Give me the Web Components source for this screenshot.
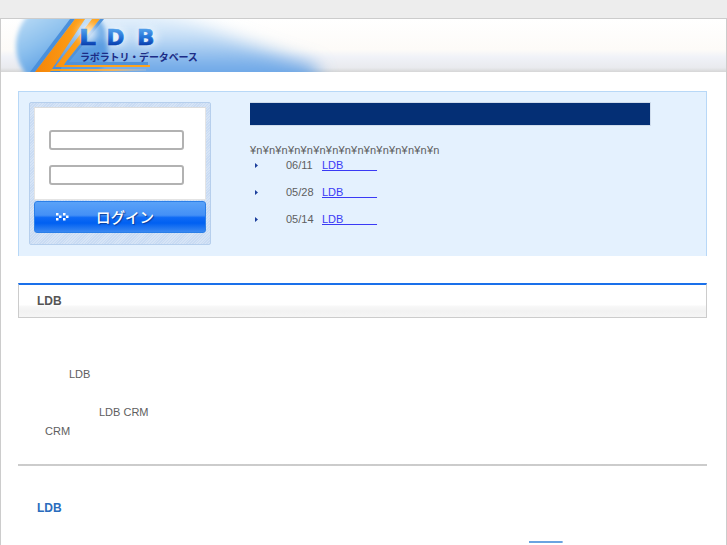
<!DOCTYPE html>
<html lang="ja"><head><meta charset="utf-8"><title>LDB</title>
<style>
html,body{margin:0;padding:0;height:545px;overflow:hidden;background:#fff}
body{font:11px/1 "Liberation Sans",Arial,"Noto Sans CJK JP",sans-serif;color:#5e5e5e}
</style></head><body>
<ldb-app>
  <ldb-header></ldb-header>
  <ldb-panel>
    <ldb-login></ldb-login>
    <ldb-news>
      <ldb-news-item date="06/11"></ldb-news-item>
      <ldb-news-item date="05/28"></ldb-news-item>
      <ldb-news-item date="05/14"></ldb-news-item>
    </ldb-news>
  </ldb-panel>
  <ldb-title>LDB</ldb-title>
  <ldb-intro></ldb-intro>
  <ldb-footer></ldb-footer>
</ldb-app>
<script>
function def(name,html,init){
  customElements.define(name,class extends HTMLElement{
    constructor(){super();this.attachShadow({mode:'open'}).innerHTML=html;}
    connectedCallback(){if(init)init(this);}
  });
}
def('ldb-app',`<style>
:host{display:block;height:545px;box-sizing:border-box;padding-top:18px;background:linear-gradient(#ededed 18px,#fff 18px)}
.frame{border:1px solid #ccc;border-bottom:0;height:527px;overflow:hidden;box-sizing:border-box;background:#fff}
</style><div class="frame"><slot></slot></div>`);

def('ldb-header',`<style>:host{display:block;height:53px}svg{display:block}</style>
<svg width="725" height="53" viewBox="1 19 725 53" xmlns="http://www.w3.org/2000/svg">
<defs>
<linearGradient id="base" x1="0" y1="0" x2="0" y2="1"><stop offset="0" stop-color="#fff"/><stop offset=".58" stop-color="#fdfbf8"/><stop offset=".72" stop-color="#f0f2f8"/><stop offset=".92" stop-color="#e9eaee"/><stop offset="1" stop-color="#d6d6d6"/></linearGradient>
<linearGradient id="sky" gradientUnits="userSpaceOnUse" x1="0" y1="19" x2="0" y2="72"><stop offset="0" stop-color="#e6f2fc"/><stop offset=".4" stop-color="#bcd9f5"/><stop offset=".75" stop-color="#86b8ec"/><stop offset="1" stop-color="#69a4e6"/></linearGradient>
<linearGradient id="ball" gradientUnits="userSpaceOnUse" x1="20" y1="19" x2="50" y2="72"><stop offset="0" stop-color="#b6d9f5"/><stop offset=".5" stop-color="#8cc0ee"/><stop offset="1" stop-color="#5a9de2"/></linearGradient>
<linearGradient id="or" gradientUnits="userSpaceOnUse" x1="35" y1="0" x2="85" y2="0"><stop offset="0" stop-color="#f58508"/><stop offset="1" stop-color="#ffa31a"/></linearGradient>
<linearGradient id="lineH" gradientUnits="userSpaceOnUse" x1="58" y1="0" x2="150" y2="0"><stop offset="0" stop-color="#f6a01c"/><stop offset=".6" stop-color="#efb35c"/><stop offset="1" stop-color="#bcc6d4" stop-opacity=".2"/></linearGradient>
<linearGradient id="wedge" gradientUnits="userSpaceOnUse" x1="0" y1="19" x2="0" y2="72"><stop offset="0" stop-color="#bcdcf6"/><stop offset="1" stop-color="#3f86d8"/></linearGradient>
<linearGradient id="letter" gradientUnits="userSpaceOnUse" x1="0" y1="-15" x2="0" y2="0"><stop offset="0" stop-color="#4c9ae8"/><stop offset=".55" stop-color="#1f6fd6"/><stop offset="1" stop-color="#0b3fae"/></linearGradient>
<filter id="b8" x="-20%" y="-40%" width="140%" height="180%"><feGaussianBlur stdDeviation="9"/></filter>
<filter id="b2" x="-20%" y="-20%" width="140%" height="140%"><feGaussianBlur stdDeviation="2"/></filter>
<filter id="b4" x="-50%" y="-50%" width="200%" height="200%"><feGaussianBlur stdDeviation="4"/></filter>
<clipPath id="hd"><rect x="0" y="19" width="727" height="53"/></clipPath>
</defs>
<rect x="0" y="19" width="727" height="53" fill="url(#base)"/>
<g clip-path="url(#hd)">
<path d="M70 6H150C195 22 255 50 315 66L325 100H60Z" fill="url(#sky)" filter="url(#b8)"/>
<circle cx="62" cy="46" r="46" fill="url(#ball)" filter="url(#b2)"/>
<path d="M85 19H95L65 56 60 72H49Z" fill="url(#wedge)"/>
<path d="M70 19H75L35 72H30Z" fill="#4a90dc"/>
<path d="M75 19H85L50 72H35Z" fill="url(#or)"/>
<path d="M92 19H100L66 62 64 65H150V67H55Z" fill="url(#or)"/>
<path d="M100 19H104L69 62H148V65H64L66 62Z" fill="#4f92da"/>
<path d="M52 69H146V71H50Z" fill="url(#lineH)"/>
<ellipse cx="88" cy="33" rx="9" ry="9" fill="#fff" opacity=".8" filter="url(#b4)"/>
<ellipse cx="116" cy="37" rx="10" ry="9" fill="#fff" opacity=".7" filter="url(#b4)"/>
<ellipse cx="147" cy="37" rx="10" ry="9" fill="#fff" opacity=".7" filter="url(#b4)"/>
</g>
<g font-family="'DejaVu Sans',sans-serif" font-weight="700" font-size="20.5" fill="url(#letter)" stroke="url(#letter)" stroke-width=".6">
<text transform="translate(79 45) scale(1.3 1)">L</text>
<text transform="translate(106.5 45) scale(1.05 1)">D</text>
<text transform="translate(137 45) scale(1.12 1)">B</text></g>
<text x="80" y="60.5" font-family="'Noto Sans CJK JP',sans-serif" font-weight="700" font-size="10" letter-spacing="-.15" fill="#1c2c86">ラボラトリ・データベース</text>
</svg>`);

def('ldb-panel',`<style>
:host{display:flex;margin:19px 19px 0 17px;height:165px;box-sizing:border-box;background:#e4f1fe;border:1px solid #b8d8f7;border-bottom:0;padding:10px 10px 0 10px}
</style><slot></slot>`);

def('ldb-login',`<style>
:host{display:block;flex:none;width:182px;height:143px;box-sizing:border-box;border:1px solid #b6cfed;border-radius:2px;padding:4px;
background:repeating-linear-gradient(135deg,#c9dbf3 0 1px,#d6e4f6 1px 2px)}
.form{height:93px;box-sizing:border-box;background:#fff;border:1px solid #e4e4e4;border-top-color:#ddd;display:flex;flex-direction:column;gap:15px;padding:22px 21px 0 14px}
.form div{height:20px;box-sizing:border-box;border:2px solid #b2b2b2;border-radius:3px;background:#fff}
.btn{margin-top:1px;height:32px;box-sizing:border-box;border:1px solid #2b7fe8;border-radius:3px;
background:linear-gradient(#5aa2f8 0,#4490f6 44%,#0f6af5 52%,#0060f2 70%,#3a88f1 100%);
display:flex;align-items:center;padding-left:21px;color:#fff}
svg{display:block;flex:none}
span{margin-left:26px;font:500 14.5px/1 "Noto Sans CJK JP",sans-serif;text-shadow:1px 1px 1px #0a3f9a}
</style>
<div class="form"><div></div><div></div></div>
<div class="btn"><svg width="14" height="10" viewBox="0 0 14 10"><g fill="#fff"><rect x="0" y="1" width="2.5" height="2.5"/><rect x="0" y="6" width="2.5" height="2.5"/><rect x="3" y="3.5" width="2.5" height="2.5"/><rect x="7" y="1" width="2.5" height="2.5"/><rect x="7" y="6" width="2.5" height="2.5"/><rect x="10" y="3.5" width="2.5" height="2.5"/></g></svg><span>ログイン</span></div>`);

def('ldb-news',`<style>
:host{display:block;flex:none;width:401px;margin-left:39px}
.bar{height:24px;box-sizing:border-box;background:#042f75;border:1px solid #cfdcec;border-width:1px 1px 1px 0}
p{margin:18px 0 0;line-height:12px;letter-spacing:.2px;white-space:nowrap}
.list{display:flex;flex-direction:column;gap:15px;margin-top:3px}
</style><div class="bar"></div><p>¥n¥n¥n¥n¥n¥n¥n¥n¥n¥n¥n¥n¥n¥n¥n</p><div class="list"><slot></slot></div>`);

def('ldb-news-item',`<style>
:host{display:flex;align-items:center;height:12px;line-height:12px}
svg{flex:none;margin-left:5px}
.d{width:36px;flex:none;margin-left:28px;white-space:nowrap}
a{color:#3a3af5;text-decoration:underline;white-space:pre}
</style><svg width="3" height="5" viewBox="0 0 3 5"><path d="M0 0L3 2.5L0 5Z" fill="#1c3f9c"/></svg><span class="d"></span><a href="#">LDB&nbsp;&nbsp;&nbsp;&nbsp;&nbsp;&nbsp;&nbsp;&nbsp;&nbsp;&nbsp;&nbsp;</a>`,
el=>{el.shadowRoot.querySelector('.d').textContent=el.getAttribute('date');});

def('ldb-title',`<style>
:host{display:block;margin:27px 19px 0 17px;height:35px;box-sizing:border-box;border:1px solid #ccc;border-top:2px solid #1a70ea;padding-left:18px;
background:linear-gradient(#fff 20px,#f8f8f8 21px,#f2f2f2 26px,#f6f6f6 33px);font:700 12px/32px "Liberation Sans",sans-serif;color:#555}
</style><slot></slot>`);

def('ldb-intro',`<style>
:host{display:block;margin:0 19px 0 17px;height:148px;box-sizing:border-box;padding-top:47px;border-bottom:2px solid;border-image:linear-gradient(#aaa,#ccc) 1;line-height:19px}
p{margin:0}
.a{padding-left:51px}.b{padding-left:81px;margin-top:19px}.c{padding-left:27px}
</style><p class="a">LDB</p><p class="b">LDB CRM</p><p class="c">CRM</p>`);

def('ldb-footer',`<style>
:host{display:block;margin:0 19px 0 17px}
h2{margin:35px 0 0 19px;font:700 12px/14px "Liberation Sans",sans-serif;color:#2a6cbd}
p{margin:14px 0 0 511px;line-height:14px}
a{color:#6aa3e0;text-decoration:underline 2px;white-space:pre}
</style><h2>LDB</h2><p><a href="#">&nbsp;&nbsp;&nbsp;&nbsp;&nbsp;&nbsp;&nbsp;&nbsp;&nbsp;&nbsp;&nbsp;</a></p>`);
</script>
</body></html>
